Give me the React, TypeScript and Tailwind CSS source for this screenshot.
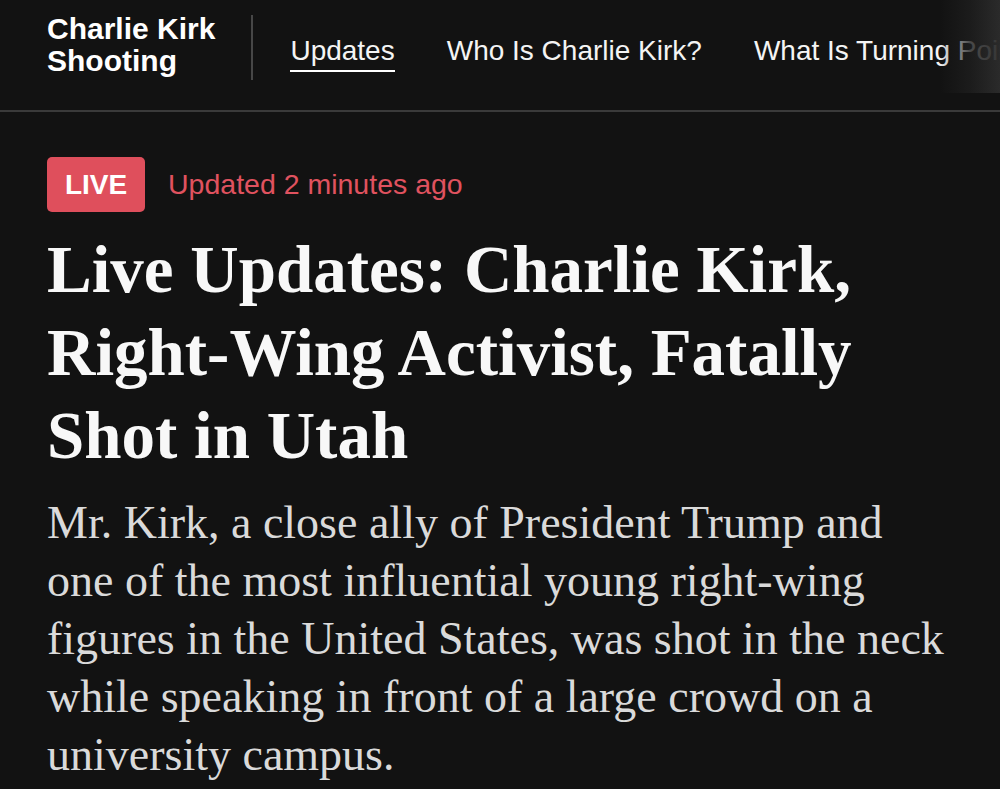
const navItems = ["Updates", "Who Is Charlie Kirk?", "What Is Turning Point USA?"];

const sans = "font-['Liberation_Sans',Arial,sans-serif]";
const serif = "font-['Liberation_Serif','Times_New_Roman',serif]";

const App = () => {
  return (
    <div className="min-h-[789px] w-full overflow-hidden bg-[#121212] text-white">
      {/* section header */}
      <header className="relative flex h-[112px] items-start border-b-2 border-[#3a3a3a] pl-[47px] pt-[13px]">
        <div className={`${sans} shrink-0 whitespace-nowrap text-[30px] font-bold leading-[32px] text-white`}>
          Charlie Kirk
          <br />
          Shooting
        </div>
        <div className="ml-[36px] mr-[37px] mt-[2px] h-[65px] w-[2px] shrink-0 bg-[#474747]" />
        <nav className={`${sans} flex min-w-0 gap-[52px] overflow-hidden whitespace-nowrap pt-[21px] text-[28px] leading-[34px] text-[#f4f4f4]`}>
          {navItems.map((item, i) => (
            <div key={item} className="flex shrink-0 flex-col">
              <span>{item}</span>
              {i === 0 && <span className="mt-[2px] h-[2px] w-full bg-white" />}
            </div>
          ))}
        </nav>
        <div className="pointer-events-none absolute right-0 top-0 h-[93px] w-[60px] bg-gradient-to-r from-[#121212]/0 via-[#1e1e1e]/80 to-[#2c2c2c]/95" />
      </header>

      <main className="px-[47px] pt-[45px]">
        <div className={`${sans} flex items-center gap-[23px]`}>
          <span className="flex h-[55px] w-[98px] items-center justify-center rounded-[5px] bg-[#df4f5c] text-[28px] font-bold text-white">
            LIVE
          </span>
          <span className="text-[28.5px] text-[#e0525f]">Updated 2 minutes ago</span>
        </div>

        <h1 className={`${serif} mt-[16px] text-[67px] font-bold leading-[83px] text-[#f8f8f8]`}>
          Live Updates: Charlie Kirk,
          <br />
          Right-Wing Activist, Fatally
          <br />
          Shot in Utah
        </h1>

        <p className={`${serif} mt-[17px] text-[46px] leading-[58px] text-[#dadada]`}>
          Mr. Kirk, a close ally of President Trump and
          <br />
          one of the most influential young right-wing
          <br />
          figures in the United States, was shot in the neck
          <br />
          while speaking in front of a large crowd on a
          <br />
          university campus.
        </p>
      </main>
    </div>
  );
};

export default App;
